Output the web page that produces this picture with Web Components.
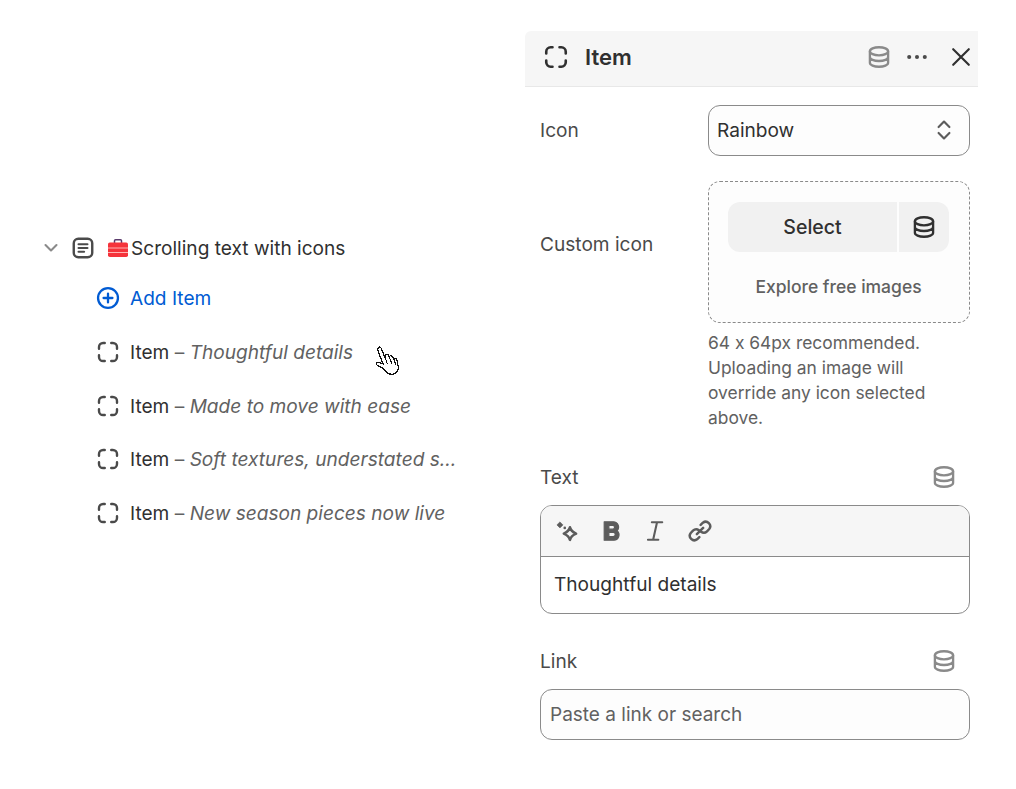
<!DOCTYPE html>
<html>
<head>
<meta charset="utf-8">
<title>Item</title>
<style>
    html, body { margin: 0; height: 100%; background: #fff; }
    body { font-family: Inter, "Liberation Sans", sans-serif; color: #303030; overflow: hidden; font-feature-settings: "calt" 0; }
</style>
</head>
<body>
<app-page>
    <item-tree slot="left">
        <tree-row kind="head" icon="doc">Scrolling text with icons</tree-row>
        <tree-row kind="add" icon="plus">Add Item</tree-row>
        <tree-row icon="frame">Item <i>Thoughtful details</i></tree-row>
        <tree-row icon="frame">Item <i>Made to move with ease</i></tree-row>
        <tree-row icon="frame">Item <i>Soft textures, understated s...</i></tree-row>
        <tree-row icon="frame">Item <i>New season pieces now live</i></tree-row>
    </item-tree>
    <hand-cursor slot="left"></hand-cursor>
    <item-panel slot="right" title="Item">
        <form-row label="Icon" inline>
            <select-box>Rainbow</select-box>
        </form-row>
        <form-row label="Custom icon" inline>
            <image-drop></image-drop>
        </form-row>
        <form-row label="Text" source>
            <text-editor>Thoughtful details</text-editor>
        </form-row>
        <form-row label="Link" source>
            <link-input placeholder="Paste a link or search"></link-input>
        </form-row>
    </item-panel>
</app-page>

<script>
// Inline icons, 20 unit grid, stroke follows currentColor
const ICONS = {
    frame: `<path d="M7.300 2.500H5.900a3.400 3.400 0 0 0-3.400 3.400v1.400M12.700 2.500h1.400a3.400 3.400 0 0 1 3.400 3.400v1.400M7.300 17.500H5.900a3.400 3.400 0 0 1-3.400-3.400v-1.400M12.700 17.500h1.400a3.400 3.400 0 0 0 3.400-3.400v-1.400" fill="none" stroke="currentColor" stroke-width="2" stroke-linecap="round"/>`,
    doc: `<rect x="2.300" y="2.300" width="15.400" height="15.400" rx="3.800" fill="none" stroke="currentColor" stroke-width="2"/><path d="M6.300 6.900h7.400M6.300 10h7.400M6.300 13.100h4.600" fill="none" stroke="currentColor" stroke-width="1.800" stroke-linecap="round"/>`,
    plus: `<circle cx="10" cy="10" r="8.300" fill="none" stroke="currentColor" stroke-width="1.900"/><path d="M10 6.300v7.400M6.300 10h7.400" fill="none" stroke="currentColor" stroke-width="1.900" stroke-linecap="round"/>`,
    chevron: `<path d="M4.500 7l5.500 5.500L15.500 7" fill="none" stroke="currentColor" stroke-width="2.100" stroke-linecap="round" stroke-linejoin="round"/>`,
    data: `<ellipse cx="10" cy="5.600" rx="7" ry="3.100" fill="none" stroke="currentColor" stroke-width="1.800"/><path d="M3 5.600v8.800c0 1.700 3.100 3.100 7 3.100s7-1.400 7-3.100V5.600M3 10c0 1.700 3.100 3.100 7 3.100s7-1.400 7-3.100" fill="none" stroke="currentColor" stroke-width="1.800"/>`,
    dots: `<circle cx="3.500" cy="10" r="1.700" fill="currentColor"/><circle cx="10" cy="10" r="1.700" fill="currentColor"/><circle cx="16.500" cy="10" r="1.700" fill="currentColor"/>`,
    close: `<path d="M3.500 3.500l13 13M16.500 3.500l-13 13" fill="none" stroke="currentColor" stroke-width="1.800" stroke-linecap="round"/>`,
    updown: `<path d="M5.500 7.500L10 3l4.500 4.500M5.500 12.500L10 17l4.500-4.500" fill="none" stroke="currentColor" stroke-width="1.800" stroke-linecap="round" stroke-linejoin="round"/>`,
    sparkle: `<path d="M11.500 7.200c.6 2.300 1.800 3.500 4.700 4.800-2.900 1.300-4.100 2.500-4.700 4.800-.6-2.300-1.800-3.500-4.700-4.800 2.900-1.300 4.100-2.500 4.700-4.800z" fill="none" stroke="currentColor" stroke-width="2" stroke-linejoin="round"/><path d="M3.800 3l2.300 2.300-2.300 2.300-2.300-2.300z" fill="currentColor" stroke="currentColor" stroke-width=".5" stroke-linejoin="round"/><circle cx="7.500" cy="7.600" r="1" fill="currentColor"/>`,
    bold: `<path d="M4 2.900h7a4 4 0 0 1 2.900 6.800 4.200 4.200 0 0 1-2.400 7.400H4zM7.600 5.700v2.900h2.900a1.450 1.450 0 0 0 0-2.900zM7.600 11.100v3.200h3.300a1.600 1.600 0 0 0 0-3.200z" fill="currentColor" fill-rule="evenodd" stroke="currentColor" stroke-width=".9" stroke-linejoin="round"/>`,
    italic: `<path d="M6.800 3.300h8M3.800 16.700h8M10.800 3.300l-3 13.400" fill="none" stroke="currentColor" stroke-width="1.600" stroke-linecap="round"/>`,
    link: `<path d="M7.600 12.400l4.800-4.800M10.500 5.300l1.700-1.700a3.500 3.500 0 0 1 4.900 4.900l-1.700 1.700a3.500 3.500 0 0 1-4.600.3M9.500 14.700l-1.700 1.700a3.500 3.500 0 0 1-4.900-4.900l1.700-1.700a3.500 3.500 0 0 1 4.600-.3" fill="none" stroke="currentColor" stroke-width="1.900" stroke-linecap="round"/>`
};

/**
 * Base class: attaches the shadow root from the style and template getters
 */
class ShadowElement extends HTMLElement {
    connectedCallback() {
        this.root = this.attachShadow({mode: 'open'});
        this.root.innerHTML = `<style>${this.style}</style>${this.template}`;
    }
    icon(name, size) {
        return `<svg viewBox="0 0 20 20" width="${size}" height="${size}" style="display:block;flex:none">${ICONS[name]}</svg>`;
    }
}

class AppPage extends ShadowElement {
    get style() {
        return `
            :host { display: grid; grid-template-columns: 525px 453px; height: 789px; }
            .left { position: relative; }
        `;
    }
    get template() {
        return `<div class="left"><slot name="left"></slot></div><div><slot name="right"></slot></div>`;
    }
}

class ItemTree extends ShadowElement {
    get style() {
        return `
            :host { display: flex; flex-direction: column; padding-top: 225px; }
        `;
    }
    get template() {
        return `<slot></slot>`;
    }
}

class TreeRow extends ShadowElement {
    get style() {
        return `
            :host { display: flex; align-items: center; height: 53.500px; font-size: 19.100px; white-space: nowrap; color: #303030; }
            :host([kind=head]) { height: 46px; padding-left: 41px; }
            :host(:not([kind=head])) { padding-left: 96px; }
            :host([kind=add]) { color: #005bd3; height: 54.600px; }
            .chev { color: #8a8a8a; margin-right: 10px; }
            .ic { color: #4a4a4a; }
            :host([kind=add]) .ic { color: #005bd3; }
            .txt { margin-left: 10px; }
            :host([kind=head]) .txt { margin-left: 0; }
            .box { margin: 0 2px 0 12px; }
            ::slotted(i) { color: #616161; }
            ::slotted(i)::before { content: "– "; font-style: normal; }
        `;
    }
    get template() {
        const head = this.getAttribute('kind') == 'head';
        return `
            ${head ? `<span class="chev">${this.icon('chevron', 20)}</span>` : ''}
            <span class="ic">${this.icon(this.getAttribute('icon'), 24)}</span>
            ${head ? `<svg class="box" viewBox="0 0 22 20" width="22" height="20">
                <path d="M7.500 5V2.800a1 1 0 0 1 1-1h5a1 1 0 0 1 1 1V5" fill="none" stroke="#5b3a6c" stroke-width="1.500"/>
                <rect x="1" y="4.500" width="20" height="14.500" rx="1.800" fill="#f5333b"/>
                <path d="M1 10h20M1 14.500h20" stroke="#ffb3b3" stroke-width="1"/>
            </svg>` : ''}
            <span class="txt"><slot></slot></span>
        `;
    }
}

class HandCursor extends ShadowElement {
    get style() {
        return `
            :host { position: absolute; left: 373px; top: 344px; display: block; }
        `;
    }
    get template() {
        return `<svg viewBox="0 0 28 34" width="31" height="37.400" style="display:block" shape-rendering="crispEdges">
            <path d="M4.500 3.500c1-1.200 2.300-.8 2.900.4l3.400 8.400.1-2.400c1.300-1 2.600-.6 3.200.7l1 2-.1-1.500c1.300-.8 2.500-.3 3.100 1l1 2.200-.1-1c1.200-.6 2.300 0 2.700 1.400l1 4.700c.6 3.700-.6 7-3.900 7.800-3.500.8-6.100-.4-7.700-3.100-1.200-2-3.400-2.900-5.700-3.700-1.900-.9-3-2.100-2.300-3.100.9-1.100 3.400-.5 6 1L4.500 6.500c-.3-1.200-.4-2.200 0-3z" fill="#fff" stroke="#111" stroke-width="1.100" stroke-linejoin="round"/>
            <path d="M10.800 12.300l2 5.200M15.300 13.400l1.800 4.500M19.300 14.900l1.200 3.500" fill="none" stroke="#111" stroke-width="1" stroke-linecap="round"/>
        </svg>`;
    }
}

class ItemPanel extends ShadowElement {
    get style() {
        return `
            :host { display: block; padding-top: 31px; }
            header {
                display: flex; align-items: center; box-sizing: border-box; height: 56px; padding: 0 5px 3px 18px;
                background: #f6f6f6; border-bottom: 1px solid #e8e8e8; border-top-left-radius: 6px;
            }
            .title { font-size: 22px; font-weight: 600; margin-left: 16px; flex: 1; color: #303030; }
            .src { color: #8a8a8a; margin-right: 13px; }
            .dots { color: #4a4a4a; margin-right: 20px; }
            .x { color: #303030; }
            main { display: flex; flex-direction: column; padding: 18px 8px 0 15px; }
        `;
    }
    get template() {
        return `
            <header>
                ${this.icon('frame', 26)}
                <span class="title">${this.getAttribute('title')}</span>
                <span class="src">${this.icon('data', 26)}</span>
                <span class="dots">${this.icon('dots', 24)}</span>
                <span class="x">${this.icon('close', 24)}</span>
            </header>
            <main><slot></slot></main>
        `;
    }
}

class FormRow extends ShadowElement {
    get style() {
        return `
            :host { display: block; margin-bottom: 35px; font-size: 19.100px; color: #4a4a4a; }
            :host([label=Icon]) { margin-bottom: 25px; }
            :host([inline]) { display: grid; grid-template-columns: 168px 262px; }
            :host(:last-child) { margin-bottom: 0; }
            .label { display: flex; align-items: center; justify-content: space-between; }
            :host([source]) .label { height: 24px; margin-bottom: 16px; padding-right: 13px; }
            :host([inline]) .label { height: 50px; align-self: start; }
            .src { color: #8a8a8a; }
            :host([label="Custom icon"]) .label { height: 126px; }
        `;
    }
    get template() {
        const source = this.hasAttribute('source');
        return `
            <div class="label"><span>${this.getAttribute('label')}</span>${source ? `<span class="src">${this.icon('data', 26)}</span>` : ''}</div>
            <div><slot></slot></div>
        `;
    }
}

class SelectBox extends ShadowElement {
    get style() {
        return `
            :host {
                display: flex; align-items: center; justify-content: space-between; box-sizing: border-box;
                height: 51px; padding: 0 13px 1px 8px; background: #fdfdfd; color: #303030;
                border: 1px solid #8a8a8a; border-radius: 12px; font-size: 19.100px;
            }
            span { color: #5c5c5c; }
        `;
    }
    get template() {
        return `<slot></slot><span>${this.icon('updown', 24)}</span>`;
    }
}

class ImageDrop extends ShadowElement {
    get style() {
        return `
            :host { display: block; }
            .zone {
                box-sizing: border-box; height: 142px; padding: 20px 20px 0 19px; background: #fdfdfd;
                border: 1px dashed #8a8a8a; border-radius: 12px;
                display: flex; flex-direction: column; align-items: center;
            }
            .btns { display: grid; grid-template-columns: 1fr 50px; gap: 2px; width: 100%; height: 50px; }
            .btns div { display: flex; align-items: center; justify-content: center; background: #f1f1f1; color: #303030; }
            .sel { border-radius: 12px 0 0 12px; font-weight: 550; font-size: 19.500px; }
            .db { border-radius: 0 12px 12px 0; }
            .explore { margin-top: 24px; font-size: 17.500px; font-weight: 550; color: #616161; }
            p { margin: 7px 0 0; font-size: 17.400px; line-height: 25px; color: #616161; }
        `;
    }
    get template() {
        return `
            <div class="zone">
                <div class="btns"><div class="sel">Select</div><div class="db">${this.icon('data', 26)}</div></div>
                <div class="explore">Explore free images</div>
            </div>
            <p>64 x 64px recommended. Uploading an image will override any icon selected above.</p>
        `;
    }
}

class TextEditor extends ShadowElement {
    get style() {
        return `
            :host { display: block; border: 1px solid #8a8a8a; border-radius: 12px; overflow: hidden; background: #fff; }
            .bar {
                display: flex; align-items: center; gap: 18px; height: 50px; padding: 0 14px;
                background: #f6f6f6; border-bottom: 1px solid #8a8a8a; color: #5c5c5c;
            }
            .body { box-sizing: border-box; height: 56px; display: flex; align-items: center; padding: 0 13px 2px; font-size: 19.100px; color: #303030; }
        `;
    }
    get template() {
        return `
            <div class="bar">${['sparkle', 'bold', 'italic', 'link'].map(n => this.icon(n, 26)).join('')}</div>
            <div class="body"><slot></slot></div>
        `;
    }
}

class LinkInput extends ShadowElement {
    get style() {
        return `
            :host {
                display: flex; align-items: center; box-sizing: border-box; height: 51px; padding: 0 9px;
                border: 1px solid #8a8a8a; border-radius: 12px; background: #fdfdfd;
                font-size: 19px; color: #616161;
            }
        `;
    }
    get template() {
        return `<span>${this.getAttribute('placeholder')}</span>`;
    }
}

customElements.define('app-page', AppPage);
customElements.define('item-tree', ItemTree);
customElements.define('tree-row', TreeRow);
customElements.define('hand-cursor', HandCursor);
customElements.define('item-panel', ItemPanel);
customElements.define('form-row', FormRow);
customElements.define('select-box', SelectBox);
customElements.define('image-drop', ImageDrop);
customElements.define('text-editor', TextEditor);
customElements.define('link-input', LinkInput);
</script>
</body>
</html>
